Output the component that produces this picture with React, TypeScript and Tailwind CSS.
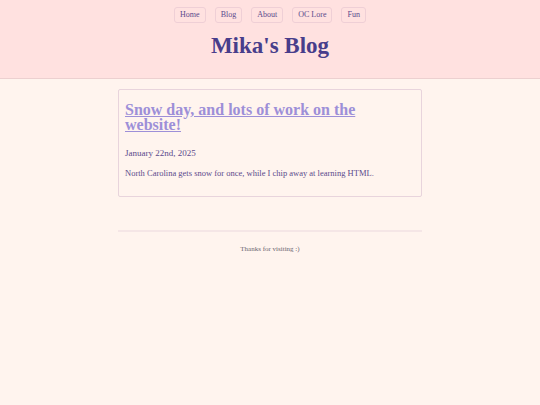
import React from "react";

const serif = { fontFamily: '"Liberation Serif", Georgia, serif' };

export default function App() {
  const nav = ["Home", "Blog", "About", "OC Lore", "Fun"];
  return (
    <div className="min-h-[405px] bg-[#fff4ee] text-[#5b4a8c]" style={serif}>
      <header className="bg-[#ffe1e0] border-b border-[#ecd0d0] h-[79px] pt-[7px]">
        <nav className="flex justify-center gap-[9px]">
          {nav.map((n) => (
            <a
              key={n}
              className="h-[16px] px-[5px] flex items-center border border-[#efcfd6] rounded-[3px] text-[8px] text-[#5b4a8c]"
            >
              {n}
            </a>
          ))}
        </nav>
        <h1 className="text-center text-[23px] font-bold text-[#483d8b] mt-[11px] leading-none">
          Mika's Blog
        </h1>
      </header>
      <main className="w-[304px] mx-auto mt-[10px]">
        <article className="border border-[#e8d4dc] rounded-[2px] px-[6px] pt-[12px] h-[108px]">
          <h2 className="text-[16px] font-bold leading-[15px] text-[#9d8fd8] underline">
            Snow day, and lots of work on the website!
          </h2>
          <p className="text-[9px] mt-[15px]">January 22nd, 2025</p>
          <p className="text-[8.5px] mt-[6px]">
            North Carolina gets snow for once, while I chip away at learning HTML.
          </p>
        </article>
        <hr className="mt-[33px] border-t-[2px] border-[#f5e6e6]" />
        <p className="text-center text-[7px] text-[#6b6470] mt-[12px]">Thanks for visiting :)</p>
      </main>
    </div>
  );
}
